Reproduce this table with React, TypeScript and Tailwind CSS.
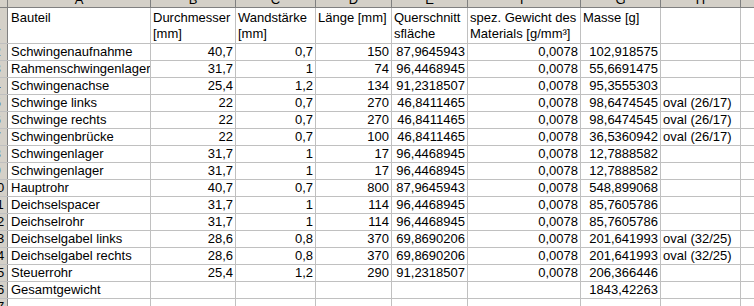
import React from 'react';

type Row = {
  n: number;
  name: string;
  d?: string;
  w?: string;
  l?: string;
  q?: string;
  s?: string;
  m?: string;
  note?: string;
};

const rows: Row[] = [
  { n: 2, name: 'Schwingenaufnahme', d: '40,7', w: '0,7', l: '150', q: '87,9645943', s: '0,0078', m: '102,918575' },
  { n: 3, name: 'Rahmenschwingenlager', d: '31,7', w: '1', l: '74', q: '96,4468945', s: '0,0078', m: '55,6691475' },
  { n: 4, name: 'Schwingenachse', d: '25,4', w: '1,2', l: '134', q: '91,2318507', s: '0,0078', m: '95,3555303' },
  { n: 5, name: 'Schwinge links', d: '22', w: '0,7', l: '270', q: '46,8411465', s: '0,0078', m: '98,6474545', note: 'oval (26/17)' },
  { n: 6, name: 'Schwinge rechts', d: '22', w: '0,7', l: '270', q: '46,8411465', s: '0,0078', m: '98,6474545', note: 'oval (26/17)' },
  { n: 7, name: 'Schwingenbrücke', d: '22', w: '0,7', l: '100', q: '46,8411465', s: '0,0078', m: '36,5360942', note: 'oval (26/17)' },
  { n: 8, name: 'Schwingenlager', d: '31,7', w: '1', l: '17', q: '96,4468945', s: '0,0078', m: '12,7888582' },
  { n: 9, name: 'Schwingenlager', d: '31,7', w: '1', l: '17', q: '96,4468945', s: '0,0078', m: '12,7888582' },
  { n: 10, name: 'Hauptrohr', d: '40,7', w: '0,7', l: '800', q: '87,9645943', s: '0,0078', m: '548,899068' },
  { n: 11, name: 'Deichselspacer', d: '31,7', w: '1', l: '114', q: '96,4468945', s: '0,0078', m: '85,7605786' },
  { n: 12, name: 'Deichselrohr', d: '31,7', w: '1', l: '114', q: '96,4468945', s: '0,0078', m: '85,7605786' },
  { n: 13, name: 'Deichselgabel links', d: '28,6', w: '0,8', l: '370', q: '69,8690206', s: '0,0078', m: '201,641993', note: 'oval (32/25)' },
  { n: 14, name: 'Deichselgabel rechts', d: '28,6', w: '0,8', l: '370', q: '69,8690206', s: '0,0078', m: '201,641993', note: 'oval (32/25)' },
  { n: 15, name: 'Steuerrohr', d: '25,4', w: '1,2', l: '290', q: '91,2318507', s: '0,0078', m: '206,366446' },
  { n: 16, name: 'Gesamtgewicht', m: '1843,42263' },
  { n: 17, name: '' },
];

// column widths incl. the 1px gridline on the right
const W = {
  rh: 'w-[21px]',
  a: 'w-[143px]',
  b: 'w-[85px]',
  c: 'w-[80px]',
  d: 'w-[76px]',
  e: 'w-[76px]',
  f: 'w-[113px]',
  g: 'w-[80px]',
  h: 'w-[80px]',
  i: 'w-[100px]',
};

const cell = 'shrink-0 border-r border-[#c0c0c0] overflow-hidden whitespace-nowrap px-[2px]';
const num = `${cell} text-right`;

function RowHead({ children }: { children?: React.ReactNode }) {
  return (
    <div className={`${W.rh} shrink-0 bg-[#d4d0c8] border-r border-[#808080] flex items-center justify-center`}>
      {children}
    </div>
  );
}

export default function App() {
  const letters: [string, string][] = [
    ['A', W.a], ['B', W.b], ['C', W.c], ['D', W.d], ['E', W.e],
    ['F', W.f], ['G', W.g], ['H', W.h], ['I', W.i],
  ];

  return (
    <div className="w-[754px] h-[306px] overflow-hidden bg-white text-black text-[13px] leading-[16px] font-['Liberation_Sans',Arial,sans-serif]">
      <div className="ml-[-13px] w-[800px]">
        {/* column letters, cut off at the top */}
        <div className="mt-[-8px] h-[16px] flex bg-[#d4d0c8] border-b border-[#808080]">
          <RowHead />
          {letters.map(([l, w]) => (
            <div key={l} className={`${w} shrink-0 border-r border-[#808080] text-center leading-[15px]`}>
              {l}
            </div>
          ))}
        </div>

        {/* header row 1 */}
        <div className="h-[36px] flex border-b border-[#c0c0c0]">
          <RowHead>1</RowHead>
          <div className={`${W.a} ${cell} pt-[2px] pl-[3px]`}>Bauteil</div>
          <div className={`${W.b} ${cell} pt-[2px]`}>Durchmesser<br />[mm]</div>
          <div className={`${W.c} ${cell} pt-[2px]`}>Wandstärke<br />[mm]</div>
          <div className={`${W.d} ${cell} pt-[2px]`}>Länge [mm]</div>
          <div className={`${W.e} ${cell} pt-[2px]`}>Querschnitt<br />sfläche</div>
          <div className={`${W.f} ${cell} pt-[2px]`}>spez. Gewicht des<br />Materials [g/mm³]</div>
          <div className={`${W.g} ${cell} pt-[2px]`}>Masse [g]</div>
          <div className={`${W.h} ${cell}`} />
          <div className={`${W.i} ${cell}`} />
        </div>

        {rows.map((r) => (
          <div key={r.n} className="h-[17px] flex border-b border-[#c0c0c0]">
            <RowHead>{r.n}</RowHead>
            <div className={`${W.a} ${cell} pl-[3px]`}>{r.name}</div>
            <div className={`${W.b} ${num}`}>{r.d}</div>
            <div className={`${W.c} ${num}`}>{r.w}</div>
            <div className={`${W.d} ${num}`}>{r.l}</div>
            <div className={`${W.e} ${num}`}>{r.q}</div>
            <div className={`${W.f} ${num}`}>{r.s}</div>
            <div className={`${W.g} ${num}`}>{r.m}</div>
            <div className={`${W.h} ${cell}`}>{r.note}</div>
            <div className={`${W.i} ${cell}`} />
          </div>
        ))}
      </div>
    </div>
  );
}
